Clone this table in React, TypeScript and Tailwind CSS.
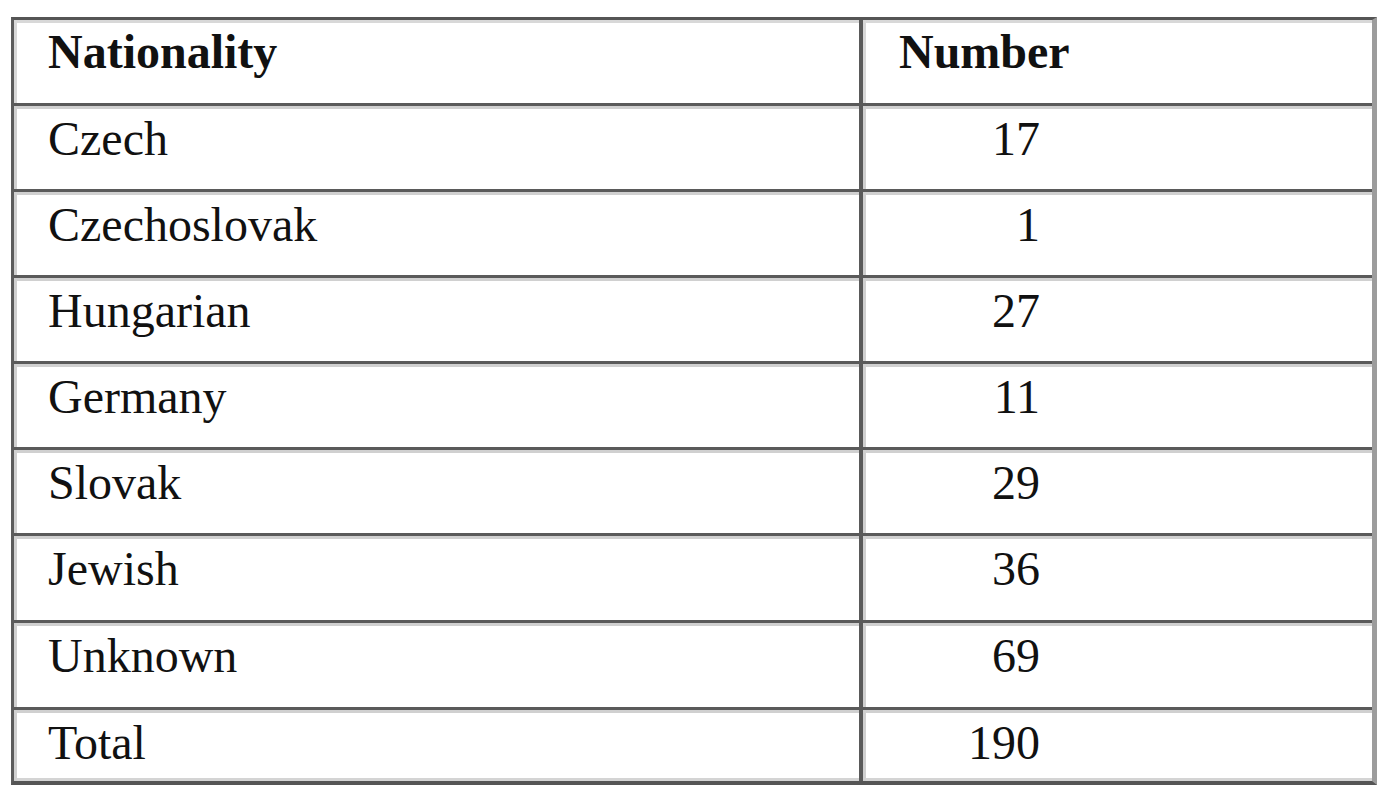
import React from "react";

const rows: [string, string][] = [
  ["Czech", "17"],
  ["Czechoslovak", "1"],
  ["Hungarian", "27"],
  ["Germany", "11"],
  ["Slovak", "29"],
  ["Jewish", "36"],
  ["Unknown", "69"],
  ["Total", "190"],
];

export default function App() {
  return (
    <div
      className="w-[1384px] h-[800px] bg-white pt-[17px] pl-[11px] text-[#111]"
      style={{ fontFamily: '"Liberation Serif", "Times New Roman", serif' }}
    >
      <div className="w-[1366px] border-l-[3px] border-t-[3px] border-b-[4px] border-r-[5px] border-l-[#5c5c5c] border-t-[#555] border-b-[#555] border-r-[#9c9c9c] shadow-[inset_0_-3px_0_#d4d4d4]">
        <div className="flex h-[83px]">
          <div className="w-[849px] h-full border-r-[4px] border-[#5a5a5a] shadow-[inset_3px_3px_0_#d8d8d8] pl-[34px] pt-[8px] text-[48px] leading-[48px] font-bold">
            Nationality
          </div>
          <div className="flex-1 h-full shadow-[inset_3px_3px_0_#d8d8d8] pl-[36px] pt-[8px] text-[48px] leading-[48px] font-bold">
            Number
          </div>
        </div>
        {rows.map(([name, num], i) => (
          <div
            key={name}
            className={
              "flex border-t-[3px] border-[#5a5a5a] " +
              (i === rows.length - 1 ? "h-[74px]" : i >= 5 ? "h-[87px]" : "h-[86px]")
            }
          >
            <div className="w-[849px] h-full border-r-[4px] border-[#5a5a5a] shadow-[inset_3px_3px_0_#d0d0d0] pl-[34px] pt-[9px] text-[48px] leading-[48px]">
              {name}
            </div>
            <div className="flex-1 h-full shadow-[inset_3px_3px_0_#d0d0d0] pt-[9px] text-[48px] leading-[48px]">
              <div className="w-[177px] text-right">{num}</div>
            </div>
          </div>
        ))}
      </div>
    </div>
  );
}
